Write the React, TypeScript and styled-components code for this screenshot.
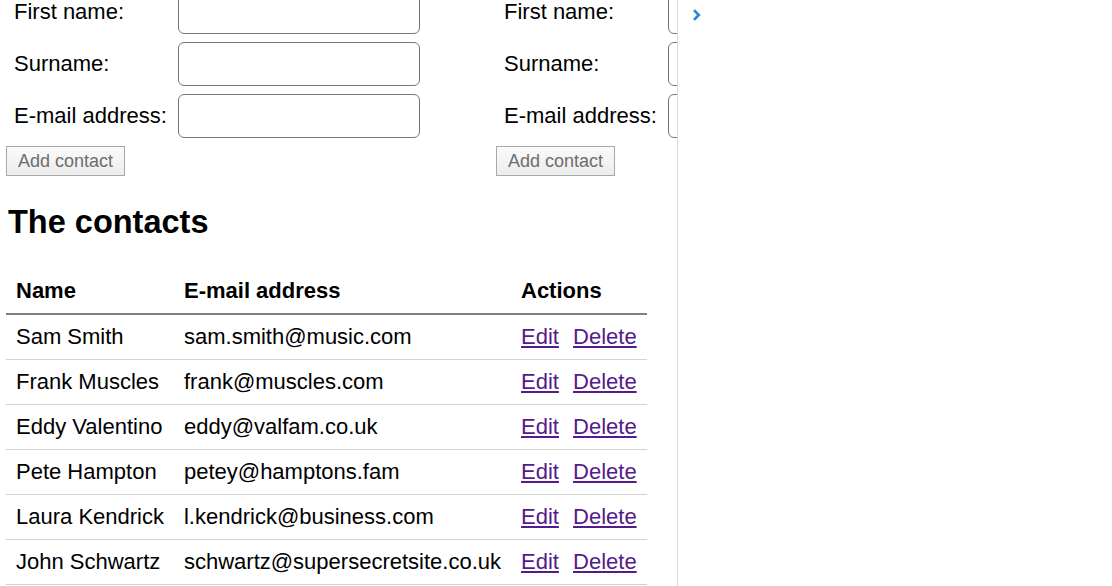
import React from "react";
import styled, { createGlobalStyle } from "styled-components";

const Global = createGlobalStyle`
  html, body { margin: 0; padding: 0; background: #fff; }
  body { font-family: "Liberation Sans", Arial, sans-serif; color: #000; overflow: hidden; }
`;

const Page = styled.div`
  display: flex;
  width: 1112px;
  height: 586px;
  overflow: hidden;
`;

const LeftPane = styled.div`
  width: 678px;
  flex: none;
  border-right: 1px solid #dcdcdc;
  overflow: hidden;
  padding: 0 0 0 6px;
  box-sizing: border-box;
`;

const RightPane = styled.div`
  flex: 1;
  padding: 8px 0 0 14px;
`;

const Forms = styled.div`
  display: flex;
  gap: 75px;
  margin-top: -10px;
  width: 1000px;
`;

const Form = styled.form`
  display: flex;
  flex-direction: column;
  gap: 8px;
  width: 415px;
  flex: none;
`;

const FieldRow = styled.div`
  display: flex;
  align-items: center;
`;

const Label = styled.label`
  width: 172px;
  flex: none;
  box-sizing: border-box;
  padding-left: 8px;
  font-size: 22px;
`;

const Input = styled.input`
  width: 242px;
  height: 44px;
  box-sizing: border-box;
  border: 1px solid #767676;
  border-radius: 6px;
  font-size: 22px;
  font-family: inherit;
  padding: 0 8px;
  background: #fff;
`;

const Button = styled.button`
  align-self: flex-start;
  height: 30px;
  box-sizing: border-box;
  padding: 0 11px;
  font-family: "Liberation Sans", Arial, sans-serif;
  font-size: 18px;
  color: #6d6d6d;
  background: linear-gradient(#fafafa, #ececec);
  border: 1px solid #a8a8a8;
  border-radius: 0;
`;

const Heading = styled.h2`
  font-size: 32.5px;
  font-weight: bold;
  margin: 28px 0 28px 2px;
  line-height: 37px;
`;

const Table = styled.table`
  border-collapse: collapse;
  font-size: 22px;
`;

const Th = styled.th`
  text-align: left;
  padding: 10px 10px;
  line-height: 24px;
  border-bottom: 2px solid #808080;
  white-space: nowrap;
`;

const Td = styled.td`
  padding: 10px 10px;
  line-height: 24px;
  border-bottom: 1px solid #d3d3d3;
  white-space: nowrap;
`;

const Link = styled.a<{ $gap?: boolean }>`
  color: #551a8b;
  text-decoration: underline;
  margin-right: ${(p) => (p.$gap ? "8px" : "0")};
`;

const contacts = [
  ["Sam Smith", "sam.smith@music.com"],
  ["Frank Muscles", "frank@muscles.com"],
  ["Eddy Valentino", "eddy@valfam.co.uk"],
  ["Pete Hampton", "petey@hamptons.fam"],
  ["Laura Kendrick", "l.kendrick@business.com"],
  ["John Schwartz", "schwartz@supersecretsite.co.uk"],
];

function ContactForm() {
  return (
    <Form onSubmit={(e) => e.preventDefault()}>
      <FieldRow>
        <Label>First name:</Label>
        <Input />
      </FieldRow>
      <FieldRow>
        <Label>Surname:</Label>
        <Input />
      </FieldRow>
      <FieldRow>
        <Label>E-mail address:</Label>
        <Input />
      </FieldRow>
      <Button disabled>Add contact</Button>
    </Form>
  );
}

export default function App() {
  return (
    <>
      <Global />
      <Page>
        <LeftPane>
          <Forms>
            <ContactForm />
            <ContactForm />
          </Forms>
          <Heading>The contacts</Heading>
          <Table>
            <thead>
              <tr>
                <Th>Name</Th>
                <Th>E-mail address</Th>
                <Th>Actions</Th>
              </tr>
            </thead>
            <tbody>
              {contacts.map(([n, e]) => (
                <tr key={n}>
                  <Td>{n}</Td>
                  <Td>{e}</Td>
                  <Td>
                    <Link href="#" $gap>Edit</Link> <Link href="#">Delete</Link>
                  </Td>
                </tr>
              ))}
            </tbody>
          </Table>
        </LeftPane>
        <RightPane>
          <svg width="10" height="14" viewBox="0 0 10 14">
            <path d="M2 2.2 L6.8 7 L2 11.8" fill="none" stroke="#2b86d6" strokeWidth="2.6" />
          </svg>
        </RightPane>
      </Page>
    </>
  );
}
